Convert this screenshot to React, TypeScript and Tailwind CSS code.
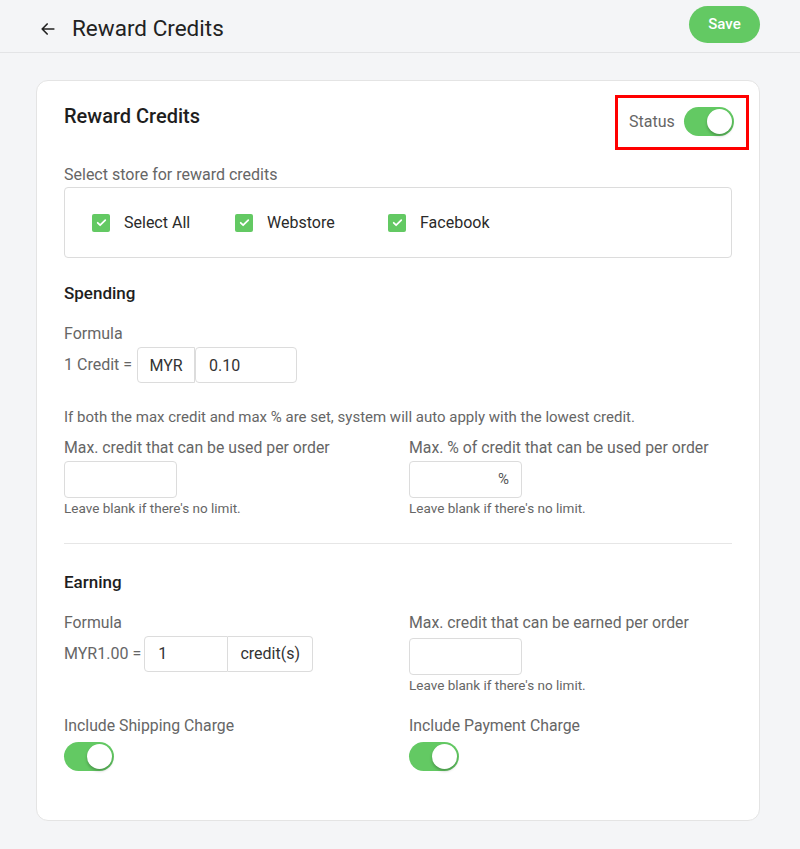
import React from 'react';

const font = { fontFamily: 'Roboto, "Noto Sans", Arial, sans-serif' };

const Toggle: React.FC = () => (
  <div className="relative h-[29px] w-[50px] rounded-full bg-[#63c963]">
    <div className="absolute right-[2px] top-[2px] h-[25px] w-[25px] rounded-full bg-white shadow-[0_2px_3px_rgba(0,0,0,0.25)]" />
  </div>
);

const Check: React.FC<{ label: string; className?: string }> = ({ label, className }) => (
  <label className={`flex items-center gap-[14px] ${className ?? ''}`}>
    <span className="flex h-[18px] w-[18px] items-center justify-center rounded-[2px] bg-[#63c963]">
      <svg viewBox="0 0 24 24" className="h-[13px] w-[13px]" fill="none" stroke="white" strokeWidth={3.2} strokeLinecap="round" strokeLinejoin="round">
        <path d="M5 12.5l4.5 4.5L19 7.5" />
      </svg>
    </span>
    <span className="text-[16px] text-[#2a2a2a]">{label}</span>
  </label>
);

const Hint: React.FC = () => (
  <p className="text-[13.5px] text-[#666]">Leave blank if there's no limit.</p>
);

export default function App() {
  return (
    <div style={font} className="min-h-[849px] bg-[#f4f5f7]">
      {/* Top bar */}
      <header className="flex h-[53px] items-center justify-between border-b border-[#e3e4e6] pl-[38px] pr-[40px]">
        <div className="flex items-center gap-[14px] pt-[5px]">
          <svg viewBox="0 0 24 24" className="h-[20px] w-[20px]" fill="none" stroke="#222" strokeWidth={2} strokeLinecap="round" strokeLinejoin="round">
            <path d="M19 12H5M11 6l-6 6 6 6" />
          </svg>
          <h1 className="text-[22.5px] text-[#222]">Reward Credits</h1>
        </div>
        <button className="mb-[3px] h-[37px] w-[71px] rounded-full bg-[#63c963] text-[15px] font-medium text-white">Save</button>
      </header>

      <div className="pl-[36px] pr-[40px] pt-[27px] pb-[28px]">
        <div className="rounded-[12px] border border-[#e4e4e4] bg-white pl-[27px] pr-[27px] pt-[14px] pb-[49px]">
          <div className="flex items-start justify-between">
            <h2 className="pt-[6px] text-[20px] font-medium text-[#1e1e1e]">Reward Credits</h2>
            <div className="-mr-[17px] flex h-[55px] w-[134px] items-center gap-[9px] border-[3px] border-[#f00] pb-[2px] pl-[11px]">
              <span className="text-[16px] text-[#666]">Status</span>
              <Toggle />
            </div>
          </div>

          <p className="mt-[13px] text-[16px] text-[#666]">Select store for reward credits</p>
          <div className="flex h-[71px] items-center rounded-[4px] border border-[#dcdcdc] pl-[27px]">
            <Check label="Select All" className="w-[143px]" />
            <Check label="Webstore" className="w-[153px]" />
            <Check label="Facebook" />
          </div>

          <h3 className="mt-[23px] text-[17px] font-medium text-[#1e1e1e]">Spending</h3>
          <p className="mt-[15px] text-[16px] text-[#666]">Formula</p>
          <div className="mt-[1px] flex items-center">
            <span className="mr-[5px] text-[16px] text-[#666]">1 Credit =</span>
            <span className="flex h-[36px] w-[58px] items-center justify-center rounded-l-[4px] border border-[#dcdcdc] pt-[3px] text-[16px] text-[#333]">MYR</span>
            <span className="flex h-[36px] w-[102px] items-center rounded-[4px] border border-[#dcdcdc] pl-[13px] pt-[2px] text-[16px] text-[#333]">0.10</span>
          </div>

          <p className="mt-[23px] text-[15px] text-[#666]">If both the max credit and max % are set, system will auto apply with the lowest credit.</p>
          <div className="mt-[8px] grid grid-cols-2 gap-[22px]">
            <div>
              <p className="text-[15.8px] text-[#666]">Max. credit that can be used per order</p>
              <div className="mt-[1px] h-[37px] w-[113px] rounded-[4px] border border-[#dcdcdc]" />
              <Hint />
            </div>
            <div>
              <p className="text-[15.8px] text-[#666]">Max. % of credit that can be used per order</p>
              <div className="mt-[1px] flex h-[37px] w-[113px] items-center justify-end rounded-[4px] border border-[#dcdcdc] pr-[12px] text-[15px] text-[#555]">%</div>
              <Hint />
            </div>
          </div>

          <div className="mt-[25px] border-t border-[#e6e6e6]" />

          <h3 className="mt-[26px] text-[17px] font-medium text-[#1e1e1e]">Earning</h3>
          <div className="mt-[16px] grid grid-cols-2 gap-[22px]">
            <div>
              <p className="text-[15.8px] text-[#666]">Formula</p>
              <div className="mt-[1px] flex items-center">
                <span className="mr-[3px] text-[16px] text-[#666]">MYR1.00 =</span>
                <span className="flex h-[36px] w-[84px] items-center rounded-l-[4px] border border-[#dcdcdc] pl-[13px] text-[16px] text-[#333]">1</span>
                <span className="flex h-[36px] w-[85px] items-center justify-center rounded-r-[4px] border border-l-0 border-[#dcdcdc] text-[16px] text-[#333]">credit(s)</span>
              </div>
            </div>
            <div>
              <p className="text-[15.8px] text-[#666]">Max. credit that can be earned per order</p>
              <div className="mt-[3px] h-[37px] w-[113px] rounded-[4px] border border-[#dcdcdc]" />
              <Hint />
            </div>
          </div>

          <div className="mt-[19px] grid grid-cols-2 gap-[22px]">
            <div>
              <p className="text-[15.8px] text-[#666]">Include Shipping Charge</p>
              <div className="mt-[4px]"><Toggle /></div>
            </div>
            <div>
              <p className="text-[15.8px] text-[#666]">Include Payment Charge</p>
              <div className="mt-[4px]"><Toggle /></div>
            </div>
          </div>
        </div>
      </div>
    </div>
  );
}
